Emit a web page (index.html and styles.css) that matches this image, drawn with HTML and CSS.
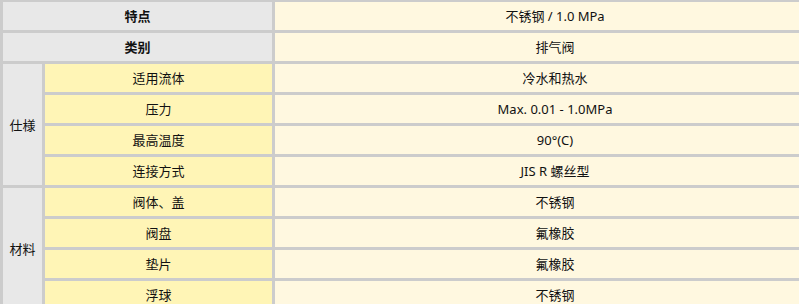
FILE: index.html
```html
<!DOCTYPE html>
<html lang="zh-CN">
    <head>
        <meta charset="UTF-8" />
        <meta name="viewport" content="width=device-width, initial-scale=1.0" />
        <title>排气阀 规格</title>
        <link rel="stylesheet" href="styles.css">
    </head>
    <body>
        <!-- Spec table -->
        <div class="spec-wrap">
            <table class="spec-table">
                <colgroup>
                    <col class="col-group" />
                    <col class="col-label" />
                    <col class="col-value" />
                </colgroup>
                <tr>
                    <th colspan="2" class="head">特点</th>
                    <td class="value">不锈钢 / 1.0 MPa</td>
                </tr>
                <tr>
                    <th colspan="2" class="head">类别</th>
                    <td class="value">排气阀</td>
                </tr>
                <tr>
                    <td rowspan="4" class="group">仕様</td>
                    <td class="label">适用流体</td>
                    <td class="value">冷水和热水</td>
                </tr>
                <tr>
                    <td class="label">压力</td>
                    <td class="value">Max. 0.01 - 1.0MPa</td>
                </tr>
                <tr>
                    <td class="label">最高温度</td>
                    <td class="value">90°(C)</td>
                </tr>
                <tr>
                    <td class="label">连接方式</td>
                    <td class="value">JIS R 螺丝型</td>
                </tr>
                <tr>
                    <td rowspan="4" class="group">材料</td>
                    <td class="label">阀体、盖</td>
                    <td class="value">不锈钢</td>
                </tr>
                <tr>
                    <td class="label">阀盘</td>
                    <td class="value">氟橡胶</td>
                </tr>
                <tr>
                    <td class="label">垫片</td>
                    <td class="value">氟橡胶</td>
                </tr>
                <tr>
                    <td class="label">浮球</td>
                    <td class="value">不锈钢</td>
                </tr>
            </table>
        </div>
    </body>
</html>
```

FILE: styles.css
```css
body {
    margin: 0;
    padding: 0;
    overflow: hidden;
    background-color: #fff;
    font-family: "Noto Sans", "Noto Sans CJK SC", sans-serif;
    font-size: 13px;
    color: #111;
}

.spec-wrap {
    margin-top: -1px;
}

.spec-table {
    border-collapse: separate;
    border-spacing: 3px;
    background-color: #cccccc;
    table-layout: fixed;
    width: 838px;
}

.col-group {
    width: 39px;
}

.col-label {
    width: 227px;
}

.col-value {
    width: 560px;
}

.spec-table th,
.spec-table td {
    height: 28px;
    padding: 0;
    text-align: center;
    vertical-align: middle;
    line-height: 18px;
}

.head {
    background-color: #e8e8e8;
    font-weight: bold;
}

.group {
    background-color: #e8e8e8;
}

.label {
    background-color: #fff5b6;
}

.value {
    background-color: #fff8e0;
}
```
